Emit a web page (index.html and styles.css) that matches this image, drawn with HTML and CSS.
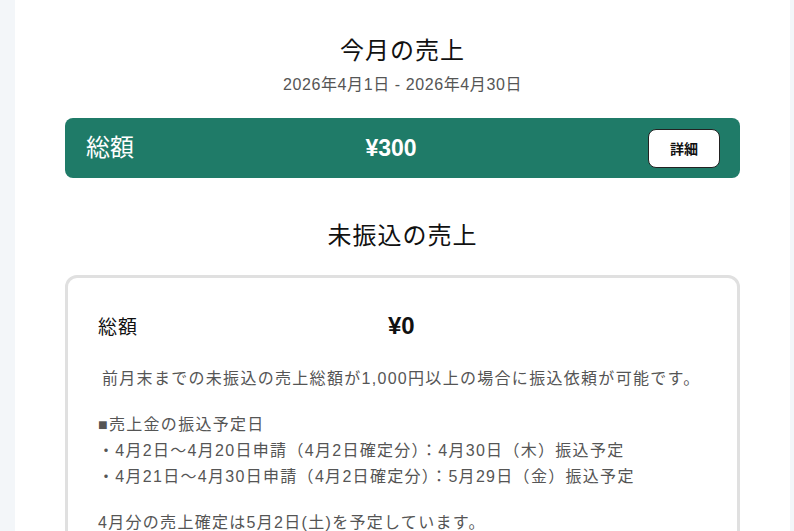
FILE: index.html
```html
<!DOCTYPE html>
<html lang="ja">
<head>
<meta charset="utf-8">
<title>今月の売上</title>
<link rel="stylesheet" href="styles.css">
</head>
<body>
<div class="page">
  <main class="main">
    <h1 class="title">今月の売上</h1>
    <p class="period">2026年4月1日 - 2026年4月30日</p>
    <div class="total-bar">
      <span class="total-label">総額</span>
      <span class="total-value">¥300</span>
      <button class="detail-btn" type="button">詳細</button>
    </div>
    <h2 class="title section-title">未振込の売上</h2>
    <section class="card">
      <div class="card-row">
        <span class="card-label">総額</span>
        <span class="card-value">¥0</span>
      </div>
      <p class="note note-lead">前月末までの未振込の売上総額が1,000円以上の場合に振込依頼が可能です。</p>
      <p class="note">■売上金の振込予定日<br>・4月2日～4月20日申請（4月2日確定分）：4月30日（木）振込予定<br>・4月21日～4月30日申請（4月2日確定分）：5月29日（金）振込予定</p>
      <p class="note">4月分の売上確定は5月2日(土)を予定しています。</p>
    </section>
  </main>
</div>
</body>
</html>
```
FILE: styles.css
```css
* { box-sizing: border-box; }
html, body { margin: 0; padding: 0; }
body {
  background: #f3f6f9;
  font-family: "Liberation Sans", "Noto Sans CJK JP", sans-serif;
  color: #111;
  overflow: hidden;
}
.page {
  margin: 0 4px 0 15px;
  background: #fff;
  min-height: 531px;
}
.main {
  padding: 33px 50px 0;
}
.title {
  margin: 0;
  font-size: 24px;
  line-height: 36px;
  font-weight: 400;
  text-align: center;
  letter-spacing: 1px;
  color: #111;
}
.period {
  margin: 4px 0 0;
  font-size: 16px;
  line-height: 24px;
  text-align: center;
  color: #555;
  letter-spacing: 0.6px;
}
.total-bar {
  margin-top: 21px;
  height: 60px;
  background: #1f7b68;
  border-radius: 8px;
  padding: 0 20px 0 21px;
  display: flex;
  align-items: center;
  justify-content: space-between;
  color: #fff;
}
.total-label {
  font-size: 24px;
  line-height: 1;
}
.total-value {
  font-size: 23px;
  font-weight: 700;
}
.detail-btn {
  width: 72px;
  height: 39px;
  background: #fff;
  border: 1px solid #222;
  border-radius: 8px;
  font-family: inherit;
  font-size: 14px;
  font-weight: 700;
  color: #111;
  padding: 0;
}
.section-title {
  margin-top: 40px;
}
.card {
  margin-top: 21px;
  border: 3px solid #e0e0e0;
  border-radius: 12px;
  padding: 31px 30px 40px;
}
.card-row {
  display: grid;
  grid-template-columns: 290px 1fr;
  align-items: center;
  height: 33px;
}
.card-label {
  font-size: 19px;
  letter-spacing: 1px;
  color: #111;
}
.card-value {
  font-size: 24px;
  font-weight: 700;
  color: #111;
}
.note {
  margin: 20px 0 0;
  font-size: 16px;
  line-height: 26px;
  letter-spacing: 1.3px;
  color: #555;
}
.note-lead {
  margin-top: 24px;
  padding-left: 4px;
}
```
